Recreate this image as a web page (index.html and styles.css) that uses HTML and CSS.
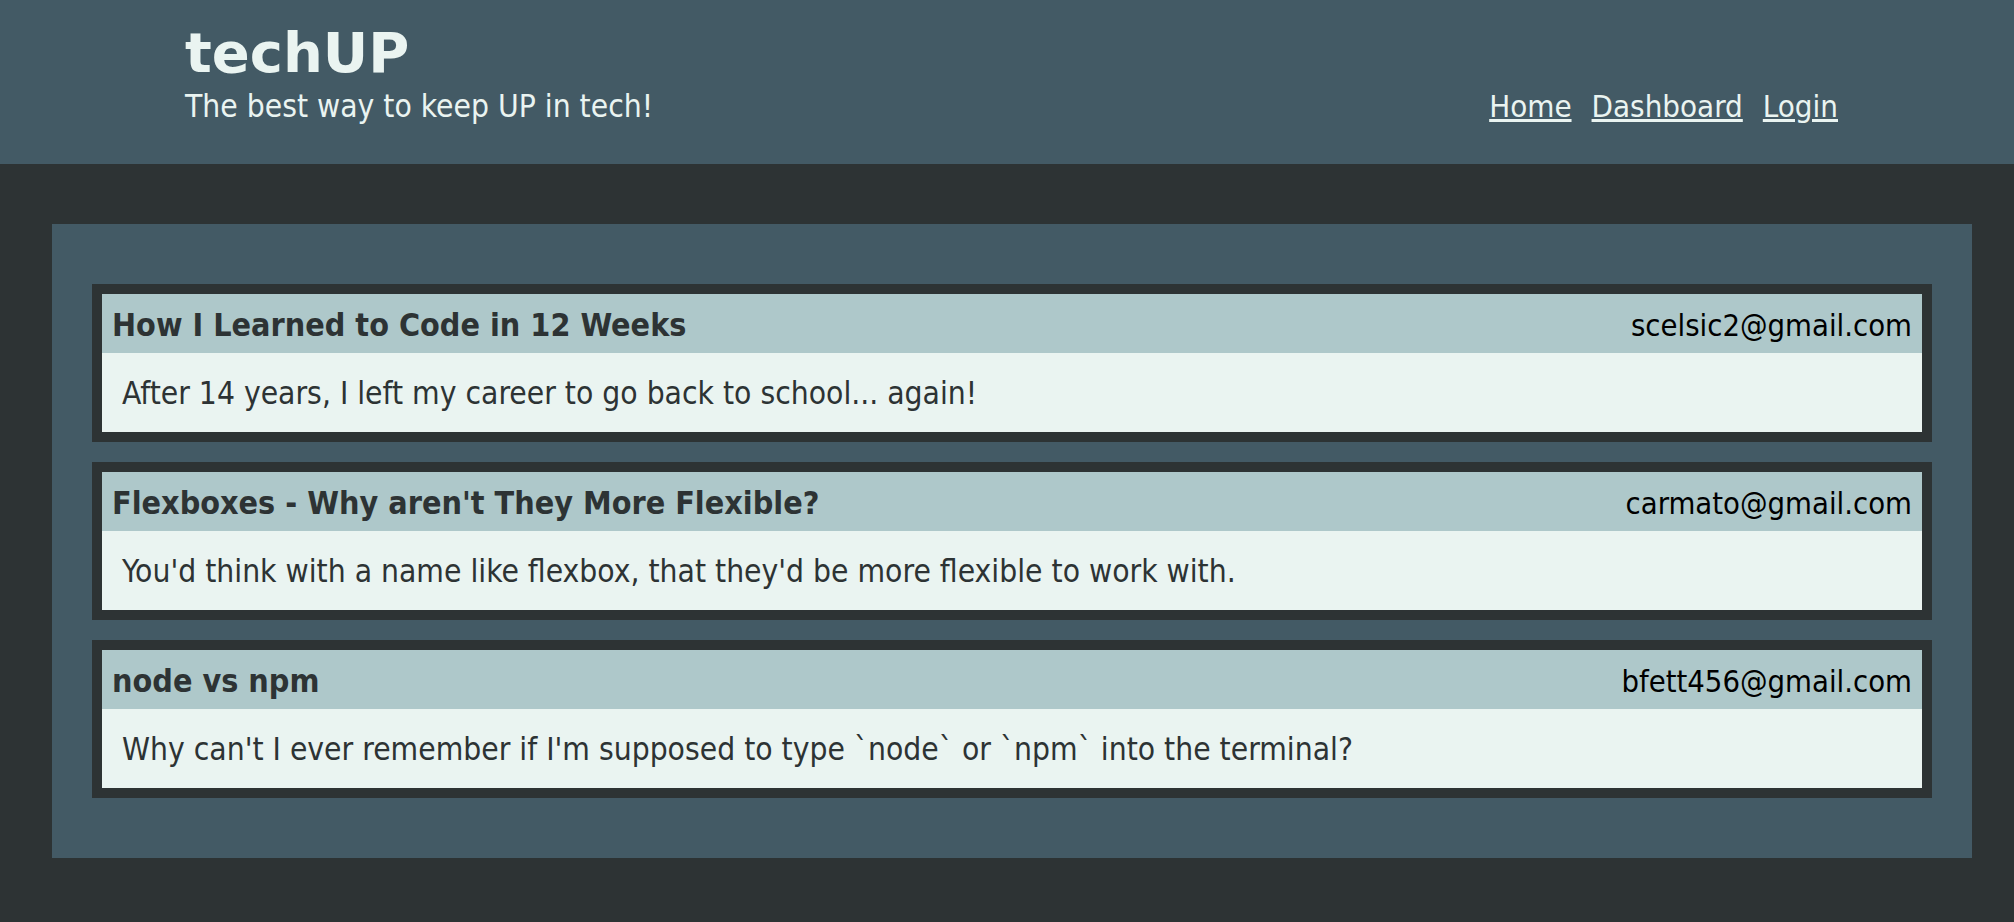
FILE: index.html
```html
<!DOCTYPE html>
<html lang="en">
<head>
<meta charset="utf-8">
<title>techUP</title>
<link rel="stylesheet" href="styles.css">
</head>
<body>
<header class="site-header">
  <div class="brand">
    <h1 class="brand-title">techUP</h1>
    <p class="brand-tagline">The best way to keep UP in tech!</p>
  </div>
  <nav class="site-nav">
    <a href="#">Home</a>
    <a href="#">Dashboard</a>
    <a href="#">Login</a>
  </nav>
</header>
<main class="posts">
  <article class="post">
    <div class="post-head">
      <h2 class="post-title">How I Learned to Code in 12 Weeks</h2>
      <span class="post-author">scelsic2@gmail.com</span>
    </div>
    <p class="post-body">After 14 years, I left my career to go back to school... again!</p>
  </article>
  <article class="post">
    <div class="post-head">
      <h2 class="post-title">Flexboxes - Why aren't They More Flexible?</h2>
      <span class="post-author">carmato@gmail.com</span>
    </div>
    <p class="post-body">You'd think with a name like flexbox, that they'd be more flexible to work with.</p>
  </article>
  <article class="post">
    <div class="post-head">
      <h2 class="post-title">node vs npm</h2>
      <span class="post-author">bfett456@gmail.com</span>
    </div>
    <p class="post-body">Why can't I ever remember if I'm supposed to type `node` or `npm` into the terminal?</p>
  </article>
</main>
</body>
</html>
```

FILE: styles.css
```css
* {
  box-sizing: border-box;
}

html, body {
  margin: 0;
  padding: 0;
}

body {
  background: #2d3334;
  font-family: "DejaVu Sans Condensed", "DejaVu Sans", sans-serif;
  font-size: 31px;
  line-height: 36px;
  color: #2d3334;
  min-height: 922px;
}

.site-header {
  background: #435a65;
  height: 164px;
  padding: 21px 176px 0 185px;
  display: flex;
  justify-content: space-between;
  align-items: flex-end;
  color: #eaf4f1;
}

.brand {
  display: flex;
  flex-direction: column;
  padding-bottom: 40px;
}

.brand-title {
  margin: 0;
  font-family: "DejaVu Sans", sans-serif;
  font-size: 56px;
  line-height: 64px;
  font-weight: bold;
}

.brand-tagline {
  margin: 3px 0 0;
  font-size: 31.5px;
}

.site-nav {
  display: flex;
  gap: 20px;
  padding-bottom: 40px;
}

.site-nav a {
  color: #eaf4f1;
  text-decoration: underline;
}

.posts {
  margin: 60px 42px 0 52px;
  background: #435a65;
  padding: 60px 40px;
  display: flex;
  flex-direction: column;
  gap: 20px;
}

.post {
  border: 10px solid #2d3334;
  background: #eaf4f1;
}

.post-head {
  background: #aec8ca;
  display: flex;
  justify-content: space-between;
  align-items: baseline;
  height: 59px;
  padding: 13px 10px 0;
  overflow: hidden;
}

.post-title {
  margin: 0;
  font-size: 32px;
  line-height: 36px;
  font-weight: bold;
  color: #2d3334;
}

.post-author {
  color: #000;
  font-size: 30.7px;
  line-height: 36px;
}

.post-body {
  margin: 0;
  height: 79px;
  padding: 22px 20px 0;
  font-size: 31.5px;
  line-height: 36px;
  color: #2d3334;
}
```
